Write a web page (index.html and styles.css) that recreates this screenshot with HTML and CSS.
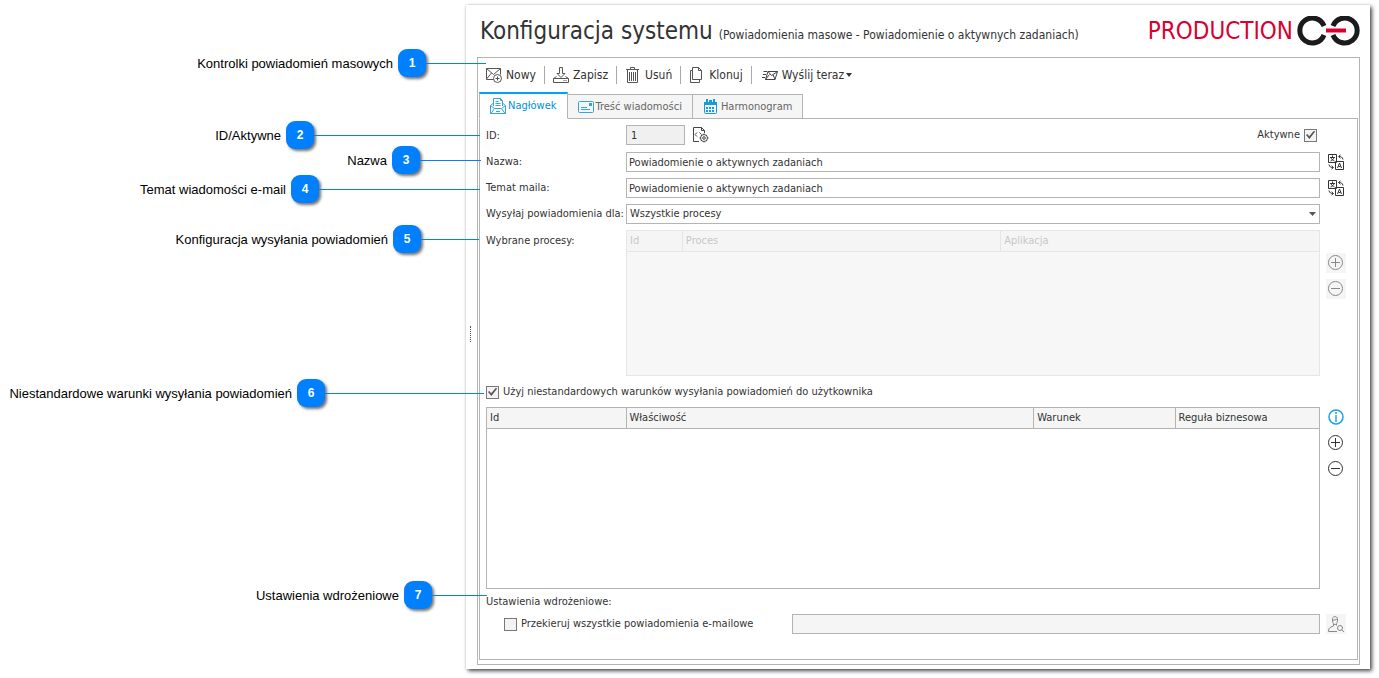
FILE: index.html
```html
<!DOCTYPE html>
<html lang="pl">
<head>
<meta charset="utf-8">
<title>Konfiguracja systemu</title>
<link rel="stylesheet" href="styles.css">
</head>
<body>
<svg class="sprite" aria-hidden="true">
  <symbol id="translate" viewBox="0 0 16 16">
    <g fill="none" stroke="#333">
      <path d="M.5 .5h8v8h-8zM7.500 7.500h8v8h-8z" fill="#fff"/>
      <path d="M2 3.500h5M4.500 1.500v2M6 3.500C5.500 5.500 4 6.500 2.500 7M3 3.500C3.500 5.500 5 6.500 6.500 7" />
      <path d="M9.500 14l2-5 2 5M10.500 12.500h2"/>
      <path d="M15 5.500C14.500 3 13 2.500 11 2.500M12.500 .8l-2 1.700 2 1.700M1 10.500C1.500 13 3 13.500 5 13.500M3.500 11.800l2 1.700-2 1.700"/>
    </g>
  </symbol>
  <symbol id="plus" viewBox="0 0 16 16"><g fill="none" stroke="currentColor"><circle cx="7.500" cy="7.500" r="7"/><path d="M7.500 3v9M3 7.500h9"/></g></symbol>
  <symbol id="minus" viewBox="0 0 16 16"><g fill="none" stroke="currentColor"><circle cx="7.500" cy="7.500" r="7"/><path d="M3 7.500h9"/></g></symbol>
</svg>

<aside class="callouts">
  <div class="callout c1"><span class="name">Kontrolki powiadomień masowych</span><b class="badge">1</b></div>
  <div class="callout c2"><span class="name">ID/Aktywne</span><b class="badge">2</b></div>
  <div class="callout c3"><span class="name">Nazwa</span><b class="badge">3</b></div>
  <div class="callout c4"><span class="name">Temat wiadomości e-mail</span><b class="badge">4</b></div>
  <div class="callout c5"><span class="name">Konfiguracja wysyłania powiadomień</span><b class="badge">5</b></div>
  <div class="callout c6"><span class="name">Niestandardowe warunki wysyłania powiadomień</span><b class="badge">6</b></div>
  <div class="callout c7"><span class="name">Ustawienia wdrożeniowe</span><b class="badge">7</b></div>
</aside>

<main class="window">
  <div class="splitter"></div>
  <header class="header">
    <h1 class="title">Konfiguracja systemu</h1>
    <span class="subtitle">(Powiadomienia masowe - Powiadomienie o aktywnych zadaniach)</span>
    <span class="brand">PRODUCTION</span>
    <svg class="logo" width="64" height="30" viewBox="0 0 64 30" aria-hidden="true">
      <g fill="none" stroke="#1b1b1b" stroke-width="5">
        <path d="M28 10A12.500 12.500 0 1 0 28 19"/>
        <path d="M37 10A12.500 12.500 0 1 1 37 19"/>
      </g>
      <path d="M30 12.500h20v4H30z" fill="#d9002f"/>
    </svg>
  </header>

  <section class="frame">
    <div class="toolbar">
      <button class="tool"><svg width="16" height="16" viewBox="0 0 16 16"><g fill="none" stroke="#555"><path d="M8 12.500H.5v-11h14v6M.5 1.500l7 6 7-6M.5 12l5-6"/><circle cx="11.500" cy="11.500" r="4" fill="#fff"/><path d="M11.500 9.500v4M9.500 11.500h4"/></g></svg>Nowy</button>
      <button class="tool"><svg width="16" height="16" viewBox="0 0 16 16"><g fill="none" stroke="#555"><path d="M6.500 .5h3v6h2.500L8 10.500 4 6.500h2.500zM.5 11.500h15v4H.5zM10.500 13.500h1M12.500 13.500h1M3.500 9.500l-3 2M12.500 9.500l3 2"/></g></svg>Zapisz</button>
      <button class="tool"><svg width="16" height="16" viewBox="0 0 16 16"><g fill="none" stroke="#555"><path d="M1 2.500h13M5.500 2.500v-2h4v2M2.500 3v12.500h10V3M4.500 5v9M6.500 5v9M8.500 5v9M10.500 5v9"/></g></svg>Usuń</button>
      <button class="tool"><svg width="16" height="16" viewBox="0 0 16 16"><g fill="none" stroke="#555"><path d="M3.500 .5h6l3 3v9h-9zM9.500 .5v3h3M3 3.500H1.500v12h9V13"/></g></svg>Klonuj</button>
      <button class="tool send"><svg width="16" height="16" viewBox="0 0 16 16"><g fill="none" stroke="#444"><path d="M6 4.500h9.500l-2.500 8H3.500zM6 4.500l3.500 4 6-4M3.500 12.500l4-5M13 12.500l-2-5M1.500 4.500H5M1 7.500h3M0 10.500h3"/></g></svg>Wyślij teraz<svg class="caret" width="6" height="4" viewBox="0 0 6 4"><path d="M0 0h6L3 4z" fill="#333"/></svg></button>
    </div>

    <nav class="tabs" role="tablist">
      <button class="tab active" role="tab" aria-selected="true"><svg width="16" height="16" viewBox="0 0 16 16"><g fill="none" stroke="#35a3dd"><path d="M3.500 8V.5h7l2 2V8M10.500 .5v2h2M5.500 3.500h3M5.500 5.500h5M5.500 7.500h5M3 5.500l-2.500 2v8h15v-8l-2.500-2M.5 7.500l4 3h7l4-3M1 15.500l3.500-5M15 15.500l-3.500-5M6 13.500h4"/></g></svg>Nagłówek</button>
      <button class="tab" role="tab"><svg width="16" height="16" viewBox="0 0 16 16"><g fill="none" stroke="#35a3dd"><rect x=".5" y="2.500" width="15" height="11" rx="1"/><path d="M3 8.500h6M3 10.500h9"/></g><path d="M11 4h3v3h-3z" fill="#35a3dd"/></svg>Treść wiadomości</button>
      <button class="tab" role="tab"><svg width="16" height="16" viewBox="0 0 16 16"><g fill="#169bdc"><path d="M1 3h13v3H1zM3 0h2v4H3zM10 0h2v4h-2zM6 1h3v2H6zM3 8h2v2H3zM6 8h2v2H6zM9 8h2v2H9zM3 11h2v2H3zM6 11h2v2H6zM9 11h2v2H9z"/></g><rect x="1.500" y="3.500" width="12" height="11" rx="1" fill="none" stroke="#169bdc"/></svg>Harmonogram</button>
    </nav>

    <form class="page">
      <div class="form">
        <label for="id">ID:</label>
        <div class="id-row">
          <input id="id" class="box short" value="1" readonly>
          <svg width="16" height="16" viewBox="0 0 16 16"><g fill="none" stroke="#444"><path d="M6 14.500H.5V.5h8l3 3V6M8.500 .5v3h3M4 5.500l-2 2 2 2M6.500 5.500l2 2"/><circle cx="11" cy="11" r="3.500" fill="#fff"/><circle cx="11" cy="11" r="1.300"/><path d="M11 6.500v1M11 14.500v1M6.500 11h1M14.500 11h1M8 8l.8.8M13.300 13.300l.8.8M14 8l-.8.8M8.700 13.300l-.8.8"/></g></svg>
          <label class="check active-check">Aktywne<input type="checkbox" checked></label>
        </div>
        <span></span>

        <label for="name">Nazwa:</label>
        <input id="name" class="box" value="Powiadomienie o aktywnych zadaniach">
        <button type="button" class="icon" aria-label="Tłumacz nazwę"><svg width="16" height="16"><use href="#translate"/></svg></button>

        <label for="subject">Temat maila:</label>
        <input id="subject" class="box" value="Powiadomienie o aktywnych zadaniach">
        <button type="button" class="icon" aria-label="Tłumacz temat"><svg width="16" height="16"><use href="#translate"/></svg></button>

        <label for="scope">Wysyłaj powiadomienia dla:</label>
        <div class="select"><select id="scope" class="box"><option>Wszystkie procesy</option></select><svg class="arrow" width="7" height="4" viewBox="0 0 7 4"><path d="M0 0h7L3.500 4z" fill="#555"/></svg></div>
        <span></span>

        <span class="top-label">Wybrane procesy:</span>
        <div class="grid processes">
          <table><thead><tr><th>Id</th><th>Proces</th><th>Aplikacja</th></tr></thead></table>
        </div>
        <div class="side disabled">
          <button type="button" class="icon" disabled aria-label="Dodaj proces"><svg width="16" height="16"><use href="#plus"/></svg></button>
          <button type="button" class="icon" disabled aria-label="Usuń proces"><svg width="16" height="16"><use href="#minus"/></svg></button>
        </div>
      </div>

      <label class="check custom-check"><input type="checkbox" checked>Użyj niestandardowych warunków wysyłania powiadomień do użytkownika</label>

      <div class="conditions-row">
        <div class="grid conditions">
          <table><thead><tr><th>Id</th><th>Właściwość</th><th>Warunek</th><th>Reguła biznesowa</th></tr></thead></table>
        </div>
        <div class="side">
          <button type="button" class="icon info" aria-label="Informacja"><svg width="16" height="16" viewBox="0 0 16 16"><circle cx="8" cy="8" r="7" fill="none" stroke="#1ba1e2" stroke-width="1.500"/><path d="M7.300 3h1.400v2H7.300zM7.300 6h1.400v7H7.300z" fill="#1ba1e2"/></svg></button>
          <button type="button" class="icon" aria-label="Dodaj warunek"><svg width="16" height="16"><use href="#plus"/></svg></button>
          <button type="button" class="icon" aria-label="Usuń warunek"><svg width="16" height="16"><use href="#minus"/></svg></button>
        </div>
      </div>

      <div class="section">Ustawienia wdrożeniowe:</div>
      <div class="redirect">
        <label class="check"><input type="checkbox">Przekieruj wszystkie powiadomienia e-mailowe</label>
        <input class="box" disabled aria-label="Użytkownik">
        <button type="button" class="icon" disabled aria-label="Wybierz użytkownika"><svg width="16" height="16" viewBox="0 0 16 16"><g fill="none" stroke="#888"><path d="M4.500 2.500C5 0 9 0 9.500 2.500v2.500C9 7 8.500 8.500 7 8.500S5 7 4.500 5zM4.500 4H7l2-1M5.500 8v2L2 11.500Q.5 12 .5 15.500H9M8.500 8v1.500"/><circle cx="12" cy="12" r="2.500"/><path d="M14 14l2 2"/></g></svg></button>
      </div>
    </form>
  </section>
</main>
</body>
</html>
```
FILE: styles.css
```css
* { box-sizing: border-box; }

body {
  margin: 0;
  min-height: 100vh;
  display: flex;
  padding: 5px 9px 9px 0;
  background: #fff;
  color: #333;
  font: 11px/14px "DejaVu Sans Condensed", "DejaVu Sans", sans-serif;
}

button, input, select { font: inherit; color: inherit; margin: 0; }
button { background: none; border: 0; padding: 0; }
svg { display: block; flex: none; }
.sprite { position: absolute; width: 0; height: 0; }

/* Numbered annotations */
.callouts { flex: none; width: 466px; }
.callout {
  position: absolute;
  z-index: 1;
  left: 0;
  display: flex;
  align-items: center;
  color: #000;
  font: 13px/16px "Liberation Sans", Arial, sans-serif;
}
.name { flex: 1; text-align: right; white-space: nowrap; padding: 1px 5px 0 0; }
.badge {
  width: 28px;
  height: 28px;
  border-radius: 9px;
  background: #007fff;
  color: #fff;
  font-size: 12px;
  line-height: 28px;
  text-align: center;
  box-shadow: 2px 2px 3px rgba(0, 0, 0, .55);
}
.callout::after { content: ""; height: 1px; background: #007fff; }
.c1 { top: 49px; width: 486px; }
.c1::after { width: 60px; }
.c2 { top: 121px; width: 480px; }
.c2::after { width: 166px; }
.c3 { top: 146px; width: 481px; }
.c3::after { width: 61px; }
.c4 { top: 175px; width: 480px; }
.c4::after { width: 161px; }
.c5 { top: 225px; width: 479px; }
.c5::after { width: 58px; }
.c6 { top: 379px; width: 484px; }
.c6::after { width: 159px; }
.c7 { top: 581px; width: 487px; }
.c7::after { width: 55px; }

/* Application window */
.window {
  position: relative;
  flex: 1;
  min-width: 0;
  display: flex;
  flex-direction: column;
  padding: 0 10px 4px 11px;
  background: #fff;
  box-shadow: 2px 2px 4px rgba(0, 0, 0, .7), 0 0 2px rgba(0, 0, 0, .15);
}
.splitter {
  position: absolute;
  left: 4px;
  top: 321px;
  height: 16px;
  border-left: 1px dotted #555;
}
.header {
  display: flex;
  align-items: baseline;
  height: 52px;
  padding: 11px 0 0 3px;
}
.title { margin: 0; font-size: 24px; line-height: 30px; font-weight: 400; }
.subtitle { margin-left: 6px; font-size: 12px; white-space: nowrap; }
.brand { margin-left: auto; font-size: 24px; line-height: 30px; color: #d9002f; }
.logo { align-self: flex-start; margin-left: 3px; }

.frame {
  flex: 1;
  display: flex;
  flex-direction: column;
  padding: 0 1px 4px;
  border: 1px solid #b4b4b4;
}
.toolbar { display: flex; align-items: center; height: 34px; padding-left: 7px; }
.tool {
  display: flex;
  align-items: center;
  gap: 4px;
  height: 18px;
  font-size: 12px;
  padding-right: 8px;
  margin-right: 8px;
  border-right: 1px solid #aaa;
}
.tool.send { border: 0; margin-left: 2px; }
.caret { margin-left: -2px; }

.tabs { position: relative; display: flex; align-items: flex-end; height: 27px; margin-bottom: -1px; }
.tab {
  display: flex;
  align-items: center;
  gap: 2px;
  height: 25px;
  padding: 0 10px;
  border: 1px solid #b4b4b4;
  border-left: 0;
  background: #f5f5f5;
  color: #666;
}
.tab.active {
  height: 27px;
  border-top: 2px solid #00a2ff;
  border-left: 1px solid #b4b4b4;
  border-bottom-color: #fff;
  background: #fff;
  color: #0090e0;
}

.page {
  flex: 1;
  display: flex;
  flex-direction: column;
  padding: 6px 11px 25px 6px;
  border: 1px solid #b4b4b4;
}
.form {
  display: grid;
  grid-template-columns: 134px minmax(0, 1fr) 20px;
  grid-template-rows: 21px;
  gap: 6px;
  align-items: center;
}
.form > :nth-child(3n + 1) { margin-right: -6px; white-space: nowrap; }
.box {
  display: block;
  width: 100%;
  height: 20px;
  padding: 0 2px;
  border: 1px solid #b4b4b4;
  border-radius: 0;
  background: #fff;
}
.box.short { width: 59px; padding-left: 4px; background: #f0f0f0; }
.box:disabled { background: #f5f5f5; }
.id-row { display: flex; align-items: center; align-self: start; gap: 8px; }
.check { display: flex; align-items: center; gap: 4px; }
.active-check { margin: 0 3px 0 auto; }
.check input {
  appearance: none;
  width: 13px;
  height: 13px;
  border: 1px solid #777;
  background: #f3f3f3;
}
.check input:checked::before {
  content: "";
  display: block;
  width: 9px;
  height: 9px;
  margin: 1px;
  background: #555;
  clip-path: polygon(0 50%, 15% 40%, 35% 65%, 90% 0, 100% 15%, 38% 95%);
}
.select { position: relative; }
.select select { appearance: none; padding: 0 3px; }
.arrow { position: absolute; right: 4px; top: 8px; }

.icon { display: grid; place-items: center; width: 20px; height: 20px; color: #333; }
.icon:disabled { background: #f5f5f5; color: #888; }
.side { display: flex; flex-direction: column; gap: 6px; align-self: start; }
.side.disabled { padding-top: 23px; }
.top-label { align-self: start; padding-top: 4px; }

.grid { border: 1px solid #b4b4b4; }
.grid table { width: 100%; border-collapse: collapse; table-layout: fixed; }
.grid th {
  height: 20px;
  padding: 0 3px;
  font-weight: 400;
  text-align: left;
  background: #f5f5f5;
  border-bottom: 1px solid #b4b4b4;
  border-right: 1px solid #b4b4b4;
}
.grid th:last-child { border-right: 0; }
.processes { height: 146px; border-color: #e6e6e6; background: #f7f7f7; color: #c8c8c8; }
.processes th { border-color: #e6e6e6; }
.processes th:nth-child(1) { width: 8%; }
.processes th:nth-child(2) { width: 46%; }
.custom-check { margin: 9px 0 8px; align-self: flex-start; }
.conditions-row { flex: 1; display: flex; gap: 6px; }
.conditions { flex: 1; }
.conditions th:nth-child(1) { width: 139px; }
.conditions th:nth-child(2) { width: 49%; }
.conditions th:nth-child(3) { width: 17%; }
.section { margin: 6px 0 5px; }
.redirect { display: flex; align-items: center; gap: 6px; padding-left: 18px; }
.redirect .check { flex: 0 0 282px; }
.redirect .box { flex: 1; }
```
